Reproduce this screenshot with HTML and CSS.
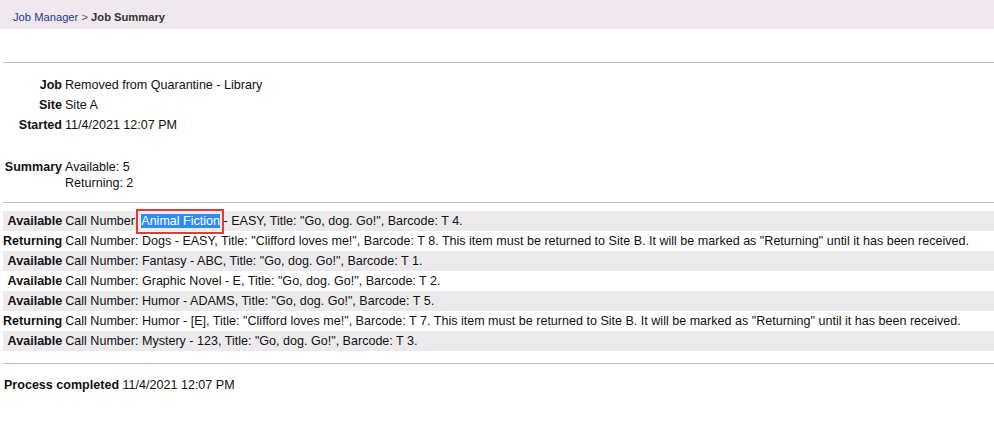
FILE: index.html
```html
<!DOCTYPE html>
<html>
<head>
<meta charset="utf-8">
<link rel="stylesheet" href="styles.css">
</head>
<body>
<div class="topbar"><a class="crumb-link">Job Manager</a> <span class="sep">&gt;</span> <span class="crumb-current">Job Summary</span></div>
<div class="content">
  <div class="rule rule-top"></div>
  <table class="info">
    <tr><th>Job</th><td>Removed from Quarantine - Library</td></tr>
    <tr><th>Site</th><td>Site A</td></tr>
    <tr><th>Started</th><td>11/4/2021 12:07 PM</td></tr>
  </table>
  <table class="info summary">
    <tr><th>Summary</th><td>Available: 5<br>Returning: 2</td></tr>
  </table>
  <div class="rule rule-mid"></div>
  <table class="items">
    <tr class="odd"><th>Available</th><td>Call Number: <span class="hl"><span class="sel">Animal Fiction</span></span> - EASY, Title: "Go, dog. Go!", Barcode: T 4.</td></tr>
    <tr><th>Returning</th><td>Call Number: Dogs - EASY, Title: "Clifford loves me!", Barcode: T 8. This item must be returned to Site B. It will be marked as "Returning" until it has been received.</td></tr>
    <tr class="odd"><th>Available</th><td>Call Number: Fantasy - ABC, Title: "Go, dog. Go!", Barcode: T 1.</td></tr>
    <tr><th>Available</th><td>Call Number: Graphic Novel - E, Title: "Go, dog. Go!", Barcode: T 2.</td></tr>
    <tr class="odd"><th>Available</th><td>Call Number: Humor - ADAMS, Title: "Go, dog. Go!", Barcode: T 5.</td></tr>
    <tr><th>Returning</th><td>Call Number: Humor - [E], Title: "Clifford loves me!", Barcode: T 7. This item must be returned to Site B. It will be marked as "Returning" until it has been received.</td></tr>
    <tr class="odd"><th>Available</th><td>Call Number: Mystery - 123, Title: "Go, dog. Go!", Barcode: T 3.</td></tr>
  </table>
  <div class="rule rule-bottom"></div>
  <p class="done"><b>Process completed</b> 11/4/2021 12:07 PM</p>
</div>
</body>
</html>
```
FILE: styles.css
```css
html, body {
  margin: 0;
  padding: 0;
  background: #ffffff;
}
body {
  font-family: "Liberation Sans", Arial, sans-serif;
  font-size: 12.55px;
  color: #111;
}
.topbar {
  height: 29px;
  box-sizing: border-box;
  background: #efe9ef;
  padding: 11px 0 0 13px;
  font-size: 11.2px;
  font-weight: bold;
  color: #333;
  line-height: 13px;
}
.crumb-link {
  color: #1f3a86;
  font-weight: normal;
}
.sep {
  color: #555;
  font-weight: normal;
}
.content {
  padding: 0 0 0 3px;
}
.rule {
  height: 0;
  border-top: 1px solid #bdbdbd;
}
.rule-top {
  margin-top: 33px;
}
.info {
  border-collapse: collapse;
  margin-top: 12px;
}
.info th {
  text-align: right;
  vertical-align: top;
  font-weight: bold;
  width: 59px;
  padding: 0 3px 0 0;
  white-space: nowrap;
}
.info td {
  padding: 0;
  height: 20px;
  vertical-align: top;
}
.info tr th, .info tr td {
  line-height: 20px;
}
.summary {
  margin-top: 24px;
}
.summary th, .summary td {
  line-height: 16px !important;
}
.rule-mid {
  margin-top: 11px;
}
.items {
  width: 100%;
  border-collapse: collapse;
  margin-top: 8px;
}
.items tr {
  height: 20px;
}
.items tr.odd {
  background: #edeaed;
}
.items th {
  text-align: right;
  font-weight: bold;
  width: 59px;
  padding: 0 3px 0 0;
  white-space: nowrap;
}
.items td {
  padding: 0;
  white-space: nowrap;
}
.hl {
  position: relative;
}
.hl::after {
  content: "";
  position: absolute;
  left: -5px;
  right: -4px;
  top: -5px;
  bottom: -6px;
  border: 2px solid #e53935;
}
.sel {
  background: #2f8cf2;
  color: #fff;
}
.rule-bottom {
  margin-top: 12px;
}
.done {
  margin: 13px 0 0 1px;
  line-height: 16px;
}
```
